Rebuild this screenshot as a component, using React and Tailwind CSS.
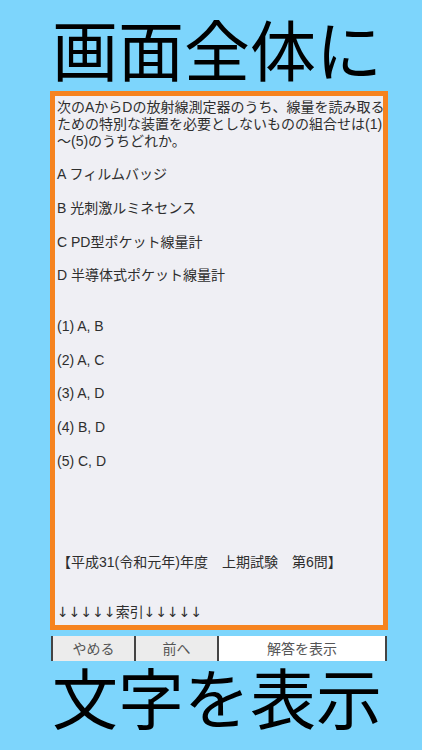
import React from "react";

const lines = [
  "次のAからDの放射線測定器のうち、線量を読み取る",
  "ための特別な装置を必要としないものの組合せは(1)",
  "〜(5)のうちどれか。",
  "",
  "A フィルムバッジ",
  "",
  "B 光刺激ルミネセンス",
  "",
  "C PD型ポケット線量計",
  "",
  "D 半導体式ポケット線量計",
  "",
  "",
  "(1) A, B",
  "",
  "(2) A, C",
  "",
  "(3) A, D",
  "",
  "(4) B, D",
  "",
  "(5) C, D",
  "",
  "",
  "",
  "",
  "",
  "【平成31(令和元年)年度　上期試験　第6問】",
  "",
  "",
];

export default function App() {
  return (
    <div className="w-[422px] h-[750px] bg-[#7dd5fc] flex flex-col overflow-hidden">
      {/* caption top */}
      <div className="h-[91px] flex items-center justify-center pl-[12px] pt-[2px] text-[66px] leading-none text-black font-normal font-['Noto_Sans_CJK_JP',sans-serif]">
        画面全体に
      </div>

      {/* question panel */}
      <div className="ml-[50px] w-[338px] h-[539px] border-[5px] border-[#f6831f] bg-[#efeff4]">
        <div className="pl-[2px] pt-[3px] text-[14px] leading-[16.85px] text-[#2e2e2e] font-['Liberation_Sans','Noto_Sans_CJK_JP',sans-serif]">
          {lines.map((l, i) => (
            <div key={i} className="whitespace-pre h-[16.85px]">
              {l}
            </div>
          ))}
          <div className="whitespace-pre h-[16.85px]">
            <span className="font-['DejaVu_Sans',sans-serif]">↓↓↓↓↓</span>
            索引
            <span className="font-['DejaVu_Sans',sans-serif]">↓↓↓↓↓</span>
          </div>
        </div>
      </div>

      {/* buttons */}
      <div className="ml-[51px] w-[336px] h-[25px] mt-[6px] flex text-[14px] leading-none text-[#555] font-['Liberation_Sans','Noto_Sans_CJK_JP',sans-serif]">
        <button className="w-[83px] h-full bg-[#ececec] border-l-2 border-[#444] flex items-center justify-center">
          やめる
        </button>
        <button className="w-[83px] h-full bg-[#ececec] border-l-2 border-[#444] flex items-center justify-center">
          前へ
        </button>
        <button className="flex-1 h-full bg-white border-l-2 border-r-2 border-[#444] flex items-center justify-center">
          解答を表示
        </button>
      </div>

      {/* caption bottom */}
      <div className="flex-1 flex items-center justify-center pl-[12px] pb-[22px] text-[66px] leading-none text-black font-normal font-['Noto_Sans_CJK_JP',sans-serif]">
        文字を表示
      </div>
    </div>
  );
}
